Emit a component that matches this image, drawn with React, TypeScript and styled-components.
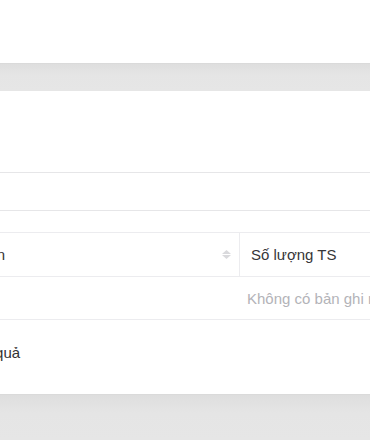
import React from "react";
import styled, { createGlobalStyle } from "styled-components";

const GlobalStyle = createGlobalStyle`
  html, body {
    margin: 0;
    padding: 0;
    background: #ffffff;
    font-family: "Liberation Sans", Arial, sans-serif;
    font-size: 15px;
    color: #333333;
  }
`;

const Page = styled.div`
  width: 370px;
  height: 440px;
  overflow: hidden;
  display: flex;
  flex-direction: column;
`;

const TopSpace = styled.div`
  height: 63px;
  flex-shrink: 0;
`;

const GrayBand = styled.div<{ $grow?: boolean }>`
  flex-shrink: 0;
  height: ${(p) => (p.$grow ? "auto" : "28px")};
  flex-grow: ${(p) => (p.$grow ? 1 : 0)};
  box-sizing: border-box;
  border-top: 1px solid #dadada;
  background: linear-gradient(#dedede, #e5e5e5 40%, #e6e6e6);
`;

// content is wider than the window and scrolled to the right
const Panel = styled.div`
  flex-shrink: 0;
  margin-left: -80px;
  width: 900px;
  background: #ffffff;
  display: flex;
  flex-direction: column;
`;

const FilterBar = styled.div`
  margin-top: 81px;
  height: 37px;
  border-top: 1px solid #e6e6e8;
  border-bottom: 1px solid #e6e6e8;
`;

const Table = styled.div`
  margin-top: 21px;
  border-top: 1px solid #ececef;
`;

const HeadRow = styled.div`
  display: flex;
  height: 43px;
  border-bottom: 1px solid #ececef;
`;

const HeadCell = styled.div<{ $width?: number }>`
  display: flex;
  align-items: center;
  box-sizing: border-box;
  padding: 0 8px 0 11px;
  width: ${(p) => (p.$width ? `${p.$width}px` : "auto")};
  flex: ${(p) => (p.$width ? "none" : 1)};
  border-right: ${(p) => (p.$width ? "1px solid #ececef" : "none")};
  color: #363638;
`;

const HeadTitle = styled.span`
  flex: 1;
  white-space: nowrap;
`;

const Sorter = styled.span`
  display: flex;
  flex-direction: column;
  gap: 1px;
`;

const EmptyRow = styled.div`
  height: 42px;
  display: flex;
  align-items: center;
  padding-left: 327px;
  border-bottom: 1px solid #ececef;
  color: #b3b3b8;
  white-space: nowrap;
`;

const Footer = styled.div`
  height: 74px;
  box-sizing: border-box;
  padding: 24px 0 0 0;
  color: #333333;
  white-space: nowrap;
`;

const SortIcon = () => (
  <Sorter>
    <svg width="9" height="4" viewBox="0 0 9 4">
      <path d="M4.5 0 L9 4 L0 4 Z" fill="#d9d9dc" />
    </svg>
    <svg width="9" height="4" viewBox="0 0 9 4">
      <path d="M0 0 L9 0 L4.5 4 Z" fill="#d9d9dc" />
    </svg>
  </Sorter>
);

export default function App() {
  return (
    <>
      <GlobalStyle />
      <Page>
        <TopSpace />
        <GrayBand />
        <Panel>
          <FilterBar />
          <Table>
            <HeadRow>
              <HeadCell $width={320}>
                <HeadTitle>Tên tài sản</HeadTitle>
                <SortIcon />
              </HeadCell>
              <HeadCell>
                <HeadTitle>Số lượng TS</HeadTitle>
              </HeadCell>
            </HeadRow>
            <EmptyRow>Không có bản ghi nào</EmptyRow>
          </Table>
          <Footer>Tổng 0 kết quả</Footer>
        </Panel>
        <GrayBand $grow />
      </Page>
    </>
  );
}
